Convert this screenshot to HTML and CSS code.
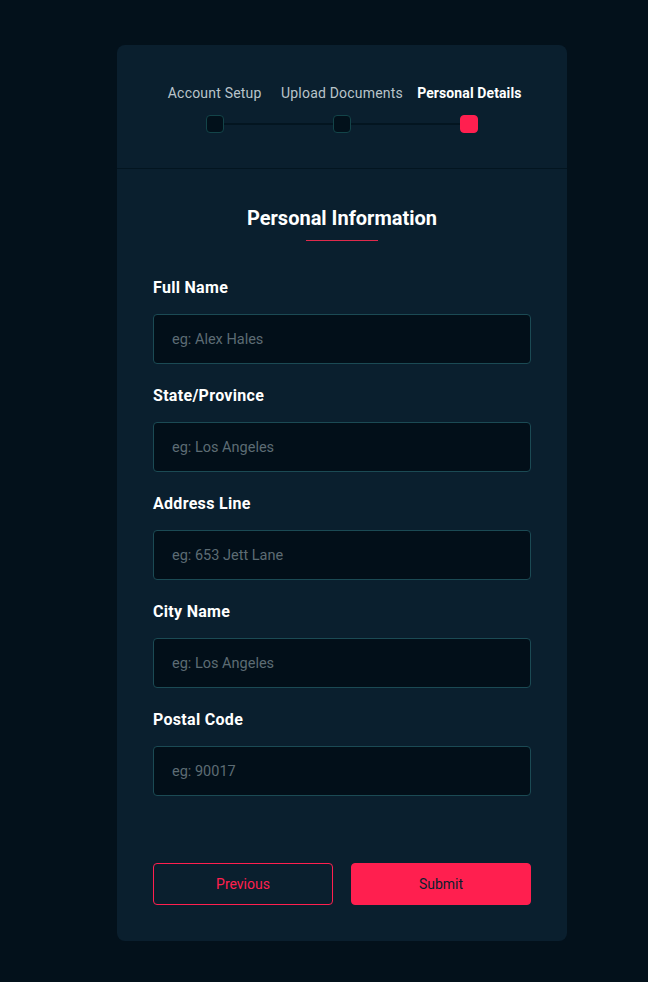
FILE: index.html
```html
<!DOCTYPE html>
<html lang="en">
<head>
<meta charset="utf-8">
<title>Personal Details</title>
<link rel="stylesheet" href="styles.css">
</head>
<body>
<div class="card">
  <div class="steps">
    <div class="step">
      <span class="step-label">Account Setup</span>
      <span class="step-dot"></span>
    </div>
    <div class="step">
      <span class="step-label">Upload Documents</span>
      <span class="step-dot"></span>
    </div>
    <div class="step active">
      <span class="step-label">Personal Details</span>
      <span class="step-dot"></span>
    </div>
  </div>
  <form class="form">
    <h2 class="title">Personal Information</h2>
    <div class="title-line"></div>
    <div class="fields">
      <label class="field">
        <span class="field-label">Full Name</span>
        <input class="input" type="text" placeholder="eg: Alex Hales">
      </label>
      <label class="field">
        <span class="field-label">State/Province</span>
        <input class="input" type="text" placeholder="eg: Los Angeles">
      </label>
      <label class="field">
        <span class="field-label">Address Line</span>
        <input class="input" type="text" placeholder="eg: 653 Jett Lane">
      </label>
      <label class="field">
        <span class="field-label">City Name</span>
        <input class="input" type="text" placeholder="eg: Los Angeles">
      </label>
      <label class="field">
        <span class="field-label">Postal Code</span>
        <input class="input" type="text" placeholder="eg: 90017">
      </label>
    </div>
    <div class="actions">
      <button type="button" class="btn btn-outline">Previous</button>
      <button type="button" class="btn btn-fill">Submit</button>
    </div>
  </form>
</div>
</body>
</html>
```

FILE: styles.css
```css
* { box-sizing: border-box; }
html, body { margin: 0; padding: 0; }
body {
  background: #03111b;
  font-family: Roboto, "Liberation Sans", sans-serif;
  min-height: 982px;
  padding-top: 45px;
}
.card {
  width: 450px;
  margin-left: 117px;
  background: #0a1f2e;
  border-radius: 8px;
}
.steps {
  position: relative;
  display: grid;
  grid-template-columns: repeat(3, 1fr);
  padding: 40px 34px 35px;
  border-bottom: 1px solid #031520;
}
.steps::before {
  content: "";
  position: absolute;
  left: calc(34px + 382px / 6);
  right: calc(34px + 382px / 6);
  top: 78px;
  height: 2px;
  background: #031520;
}
.step {
  display: flex;
  flex-direction: column;
  align-items: center;
  position: relative;
}
.step-label {
  font-size: 14px;
  line-height: 16px;
  letter-spacing: 0.2px;
  color: #b9c4ca;
  white-space: nowrap;
}
.step.active .step-label {
  color: #ffffff;
  font-weight: 700;
  letter-spacing: 0.1px;
}
.step-dot {
  margin-top: 14px;
  width: 18px;
  height: 18px;
  border-radius: 4px;
  background: #02111b;
  border: 1px solid #134449;
}
.step.active .step-dot {
  background: #ff1f4f;
  border-color: #ff1f4f;
}
.form {
  padding: 37px 36px 36px;
  display: flex;
  flex-direction: column;
}
.title {
  margin: 0;
  text-align: center;
  font-size: 20px;
  line-height: 24px;
  font-weight: 700;
  color: #ffffff;
}
.title-line {
  width: 72px;
  height: 1px;
  background: #e02a4c;
  margin: 10px auto 0;
}
.fields {
  margin-top: 38px;
  display: flex;
  flex-direction: column;
  gap: 23px;
}
.field {
  display: flex;
  flex-direction: column;
  gap: 17px;
}
.field-label {
  font-size: 16px;
  line-height: 18px;
  letter-spacing: 0.3px;
  font-weight: 700;
  color: #ffffff;
}
.input {
  height: 50px;
  width: 100%;
  background: #020f19;
  border: 1px solid #1b4a54;
  border-radius: 4px;
  padding: 0 18px;
  font-family: Roboto, "Liberation Sans", sans-serif;
  font-size: 14.5px;
  color: #ffffff;
  outline: none;
}
.input::placeholder { color: #5d6c74; }
.actions {
  margin-top: 67px;
  display: grid;
  grid-template-columns: 1fr 1fr;
  gap: 18px;
}
.btn {
  height: 42px;
  border-radius: 4px;
  font-family: Roboto, "Liberation Sans", sans-serif;
  font-size: 14px;
  cursor: pointer;
}
.btn-outline {
  background: transparent;
  border: 1px solid #ff1f4f;
  color: #ff1f4f;
}
.btn-fill {
  background: #ff1f4f;
  border: 1px solid #ff1f4f;
  color: #0a1f2e;
}
```
